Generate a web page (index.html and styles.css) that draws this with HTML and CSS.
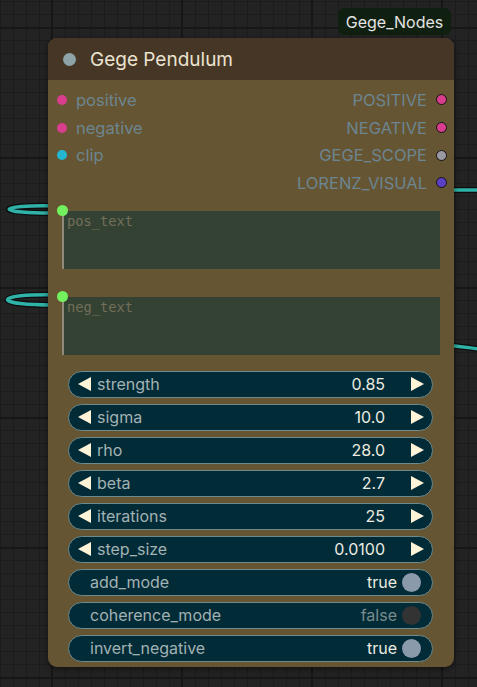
FILE: index.html
```html
<!DOCTYPE html>
<html>
<head>
<meta charset="utf-8">
<link rel="stylesheet" href="styles.css">
</head>
<body>
<div class="canvas">
  <svg class="wires" width="477" height="687" viewBox="0 0 477 687">
    <g fill="none" stroke-linecap="round">
      <path class="wire-shadow" d="M60 206 C -8 204, -8 214, 60 213"/>
      <path class="wire" d="M60 206 C -8 204, -8 214, 60 213"/>
      <path class="wire-shadow" d="M60 295 C -10 293, -10 306, 60 305"/>
      <path class="wire" d="M60 295 C -10 293, -10 306, 60 305"/>
      <path class="wire-shadow" d="M440 190 L 480 190"/>
      <path class="wire" d="M440 190 L 480 190"/>
      <path class="wire-shadow" d="M440 345 C 460 346, 470 348, 480 349"/>
      <path class="wire" d="M440 345 C 460 346, 470 348, 480 349"/>
    </g>
  </svg>

  <div class="badge">Gege_Nodes</div>

  <div class="node">
    <div class="node-header">
      <span class="title-dot"></span>
      <span class="title">Gege Pendulum</span>
    </div>
    <div class="node-body">
      <div class="slots">
        <div class="inputs">
          <div class="slot"><span class="dot pink"></span><span class="slot-label">positive</span></div>
          <div class="slot"><span class="dot pink"></span><span class="slot-label">negative</span></div>
          <div class="slot"><span class="dot cyan"></span><span class="slot-label">clip</span></div>
        </div>
        <div class="outputs">
          <div class="slot out"><span class="slot-label">POSITIVE</span><span class="dot pink ring"></span></div>
          <div class="slot out"><span class="slot-label">NEGATIVE</span><span class="dot pink ring"></span></div>
          <div class="slot out"><span class="slot-label">GEGE_SCOPE</span><span class="dot grey ring"></span></div>
          <div class="slot out"><span class="slot-label">LORENZ_VISUAL</span><span class="dot purple ring"></span></div>
        </div>
      </div>

      <div class="text-widget">
        <span class="text-dot"></span>
        <div class="textarea">pos_text</div>
      </div>
      <div class="text-widget second">
        <span class="text-dot"></span>
        <div class="textarea">neg_text</div>
      </div>

      <div class="widgets">
        <div class="widget number"><span class="arrow left"></span><span class="w-label">strength</span><span class="w-value">0.85</span><span class="arrow right"></span></div>
        <div class="widget number"><span class="arrow left"></span><span class="w-label">sigma</span><span class="w-value">10.0</span><span class="arrow right"></span></div>
        <div class="widget number"><span class="arrow left"></span><span class="w-label">rho</span><span class="w-value">28.0</span><span class="arrow right"></span></div>
        <div class="widget number"><span class="arrow left"></span><span class="w-label">beta</span><span class="w-value">2.7</span><span class="arrow right"></span></div>
        <div class="widget number"><span class="arrow left"></span><span class="w-label">iterations</span><span class="w-value">25</span><span class="arrow right"></span></div>
        <div class="widget number"><span class="arrow left"></span><span class="w-label">step_size</span><span class="w-value">0.0100</span><span class="arrow right"></span></div>
        <div class="widget toggle"><span class="w-label">add_mode</span><span class="w-value">true</span><span class="knob on"></span></div>
        <div class="widget toggle"><span class="w-label">coherence_mode</span><span class="w-value off">false</span><span class="knob"></span></div>
        <div class="widget toggle"><span class="w-label">invert_negative</span><span class="w-value">true</span><span class="knob on"></span></div>
      </div>
    </div>
  </div>
</div>
</body>
</html>
```

FILE: styles.css
```css
* { box-sizing: border-box; }
html, body {
  margin: 0;
  padding: 0;
  width: 477px;
  height: 687px;
  overflow: hidden;
  font-family: Inter, "Noto Sans", sans-serif;
}
.canvas {
  position: relative;
  width: 477px;
  height: 687px;
  background-color: #232323;
  background-image:
    linear-gradient(to right, #171717 0 2px, transparent 2px),
    linear-gradient(to bottom, #171717 0 2px, transparent 2px),
    linear-gradient(to right, #1c1c1c 0 1px, transparent 1px),
    linear-gradient(to bottom, #1c1c1c 0 1px, transparent 1px);
  background-size: 130px 130px, 130px 130px, 13px 13px, 13px 13px;
  background-position: 51px 27px, 51px 27px, 0 1px, 0 1px;
}
.wires {
  position: absolute;
  left: 0;
  top: 0;
}
.wire-shadow { stroke: #0d0d0d; stroke-width: 6; }
.wire { stroke: #2fb3a8; stroke-width: 3.5; }

.badge {
  position: absolute;
  left: 338px;
  top: 8px;
  width: 113px;
  height: 27px;
  display: flex;
  align-items: center;
  justify-content: center;
  background: #0f1f10;
  color: #e4e4e4;
  font-size: 16px;
  border-radius: 7px;
}

.node {
  position: absolute;
  left: 48px;
  top: 38px;
  width: 406px;
  height: 629px;
  background: #665533;
  border-radius: 9px;
  box-shadow: 0 2px 6px rgba(0,0,0,0.5);
}
.node-header {
  height: 42px;
  background: #453626;
  border-radius: 9px 9px 0 0;
  display: flex;
  align-items: center;
  padding-left: 15px;
}
.title-dot {
  width: 13px;
  height: 13px;
  border-radius: 50%;
  background: #8da3a8;
}
.title {
  margin-left: 14px;
  color: #ebe3d0;
  font-size: 19px;
}
.node-body {
  display: flex;
  flex-direction: column;
  padding-top: 6px;
}
.slots {
  display: flex;
  justify-content: space-between;
}
.inputs, .outputs {
  display: flex;
  flex-direction: column;
}
.slot {
  height: 27.7px;
  display: flex;
  align-items: center;
  color: #6c8590;
  font-size: 16.5px;
}
.inputs .slot { padding-left: 9px; }
.inputs .slot .slot-label { margin-left: 9px; }
.outputs .slot { justify-content: flex-end; padding-right: 7px; }
.outputs .slot .slot-label { margin-right: 9px; }
.dot {
  width: 10px;
  height: 10px;
  border-radius: 50%;
  display: inline-block;
}
.dot.ring {
  width: 11px;
  height: 11px;
  border: 1.5px solid #121212;
}
.pink { background: #d93e8e; }
.cyan { background: #23b8cf; }
.grey { background: #9a9aa4; }
.purple { background: #5b3fc4; }

.text-widget {
  position: relative;
  margin: 14px 14px 0 14px;
}
.text-widget.second { margin-top: 28px; }
.text-dot {
  position: absolute;
  left: -5px;
  top: -6px;
  width: 11px;
  height: 11px;
  border-radius: 50%;
  background: #72f05e;
}
.textarea {
  height: 58px;
  background: #344234;
  border-left: 2px solid #8d8a7c;
  color: #726e58;
  font-family: "DejaVu Sans Mono", monospace;
  font-size: 13.7px;
  padding: 1px 3px;
  line-height: 18px;
}

.widgets {
  display: flex;
  flex-direction: column;
  gap: 6px;
  margin: 16px 21px 0 20px;
}
.widget {
  height: 27px;
  border-radius: 14px;
  background: #022b38;
  border: 1px solid #6d8a8d;
  display: flex;
  align-items: center;
  font-size: 16px;
}
.w-label { color: #a2b2b2; }
.w-value { color: #ecebe0; margin-left: auto; }
.w-value.off { color: #7a8b8b; }
.number { padding: 0 8px 0 9px; }
.number .w-label { margin-left: 6px; }
.number .w-value { margin-right: 26px; }
.arrow {
  width: 0;
  height: 0;
  border-top: 7px solid transparent;
  border-bottom: 7px solid transparent;
}
.arrow.left { border-right: 13px solid #fff3d8; }
.arrow.right { border-left: 13px solid #fff3d8; }
.toggle { padding: 0 11px 0 21px; }
.toggle .w-value { margin-right: 5px; }
.knob {
  width: 19px;
  height: 19px;
  border-radius: 50%;
  background: #333333;
}
.knob.on { background: #8b9aab; }
```
